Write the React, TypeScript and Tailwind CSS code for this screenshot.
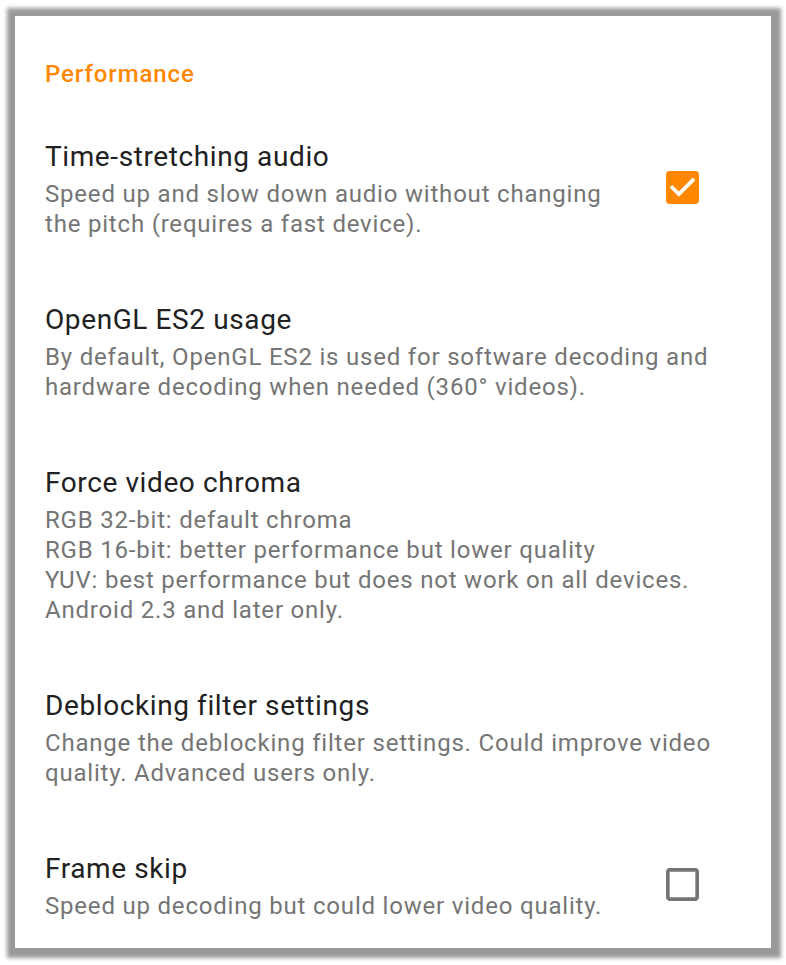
import React from 'react'

type Pref = {
  title: string
  summary: string[]
  checkbox?: 'on' | 'off'
}

const PREFS: Pref[] = [
  {
    title: 'Time-stretching audio',
    summary: ['Speed up and slow down audio without changing the pitch (requires a fast device).'],
    checkbox: 'on',
  },
  {
    title: 'OpenGL ES2 usage',
    summary: ['By default, OpenGL ES2 is used for software decoding and hardware decoding when needed (360° videos).'],
  },
  {
    title: 'Force video chroma',
    summary: [
      'RGB 32-bit: default chroma',
      'RGB 16-bit: better performance but lower quality',
      'YUV: best performance but does not work on all devices.',
      'Android 2.3 and later only.',
    ],
  },
  {
    title: 'Deblocking filter settings',
    summary: ['Change the deblocking filter settings. Could improve video quality. Advanced users only.'],
  },
  {
    title: 'Frame skip',
    summary: ['Speed up decoding but could lower video quality.'],
    checkbox: 'off',
  },
]

function CheckBox({ checked }: { checked: boolean }) {
  if (checked) {
    return (
      <svg width="33" height="33" viewBox="3 3 18 18">
        <rect x="3" y="3" width="18" height="18" rx="2" fill="#ff8800" />
        <path d="M10 17l-5-5 1.41-1.41L10 14.17l7.59-7.59L19 8l-9 9z" fill="#ffffff" />
      </svg>
    )
  }
  return (
    <svg width="33" height="33" viewBox="3 3 18 18">
      <path
        d="M19 5v14H5V5h14m0-2H5c-1.1 0-2 .9-2 2v14c0 1.1.9 2 2 2h14c1.1 0 2-.9 2-2V5c0-1.1-.9-2-2-2z"
        fill="#757575"
      />
    </svg>
  )
}

function PrefRow({ pref }: { pref: Pref }) {
  return (
    <div className="flex items-center py-[32px] pl-[30px] pr-[30px]">
      <div className="flex-1 min-w-0">
        <div className="text-[28px] leading-[34px] tracking-[0.6px] text-[#212121]">{pref.title}</div>
        <div className="mt-[5px] text-[24px] leading-[30px] tracking-[0.8px] text-[#757575]">
          {pref.summary.map((line) => (
            <div key={line}>{line}</div>
          ))}
        </div>
      </div>
      {pref.checkbox && (
        <div className="ml-[30px] mr-[42px] mb-[4px] shrink-0">
          <CheckBox checked={pref.checkbox === 'on'} />
        </div>
      )}
    </div>
  )
}

export default function App() {
  return (
    <div
      className="w-[786px] h-[965px] bg-white pl-[15px] pt-[16px] overflow-hidden"
      style={{ fontFamily: 'Roboto, "Noto Sans", sans-serif' }}
    >
      <div className="w-[756px] h-[932px] bg-white shadow-[1px_1px_4px_9px_rgba(0,0,0,0.4)] pt-[42px]">
        <div className="pl-[30px] mb-[18px] text-[24px] leading-[32px] tracking-[0.9px] font-medium text-[#ff8800]">
          Performance
        </div>
        {PREFS.map((p) => (
          <PrefRow key={p.title} pref={p} />
        ))}
      </div>
    </div>
  )
}
